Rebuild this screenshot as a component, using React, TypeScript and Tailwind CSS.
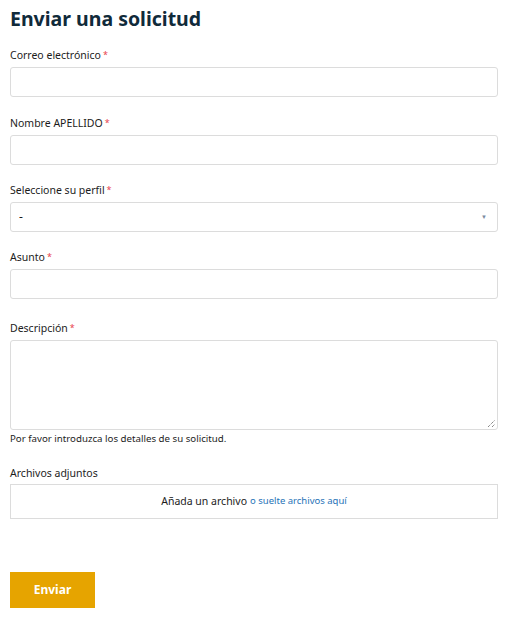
import React from "react";

const font = { fontFamily: '"Noto Sans", "Open Sans", Arial, sans-serif' };

function Label({ text, required = true }: { text: string; required?: boolean }) {
  return (
    <label className="block h-[14px] text-[10.5px] leading-[14px] text-[#1c1c1c]">
      {text}
      {required && <span className="ml-[2px] text-[9px] align-top text-[#e8424e]">*</span>}
    </label>
  );
}

function Input() {
  return <div className="mt-[5px] h-[30px] w-full rounded-[3px] border border-[#dcdcdc] bg-white" />;
}

export default function App() {
  return (
    <div className="w-[523px] h-[617px] bg-white px-[10px] pt-[6px]" style={font}>
      <div className="w-[488px]">
        <h1 className="h-[26px] text-[19.5px] leading-[26px] font-bold text-[#102a3a]">Enviar una solicitud</h1>

        <div className="mt-[16px]">
          <Label text="Correo electrónico" />
          <Input />
        </div>

        <div className="mt-[19px]">
          <Label text="Nombre APELLIDO" />
          <Input />
        </div>

        <div className="mt-[18px]">
          <Label text="Seleccione su perfil" />
          <div className="mt-[5px] h-[30px] w-full rounded-[3px] border border-[#dcdcdc] bg-white flex items-center justify-between pl-[8px] pr-[10px]">
            <span className="text-[12px] text-[#1c1c1c]">-</span>
            <span className="text-[6px] text-[#7a8aa0] leading-none">▼</span>
          </div>
        </div>

        <div className="mt-[18px]">
          <Label text="Asunto" />
          <Input />
        </div>

        <div className="mt-[22px]">
          <Label text="Descripción" />
          <div className="mt-[5px] relative h-[90px] w-full rounded-[3px] border border-[#dcdcdc] bg-white">
            <svg className="absolute right-[1px] bottom-[1px]" width="9" height="9" viewBox="0 0 9 9">
              <line x1="1" y1="8" x2="8" y2="1" stroke="#555" strokeWidth="1" strokeDasharray="1 1" />
              <line x1="5" y1="8" x2="8" y2="5" stroke="#555" strokeWidth="1" strokeDasharray="1 1" />
            </svg>
          </div>
          <p className="mt-[2px] h-[14px] text-[9.7px] leading-[14px] text-[#1c1c1c]">Por favor introduzca los detalles de su solicitud.</p>
        </div>

        <div className="mt-[20px]">
          <Label text="Archivos adjuntos" required={false} />
          <div className="mt-[4px] h-[35px] w-full border border-[#dcdcdc] bg-white flex items-center justify-center gap-[3px]">
            <span className="text-[10.5px] text-[#1c1c1c]">Añada un archivo</span>
            <span className="text-[9.5px] text-[#1f73b7]">o suelte archivos aquí</span>
          </div>
        </div>

        <button className="mt-[53px] h-[36px] w-[85px] bg-[#e6a400] text-white text-[12px] font-bold flex items-center justify-center">
          Enviar
        </button>
      </div>
    </div>
  );
}
